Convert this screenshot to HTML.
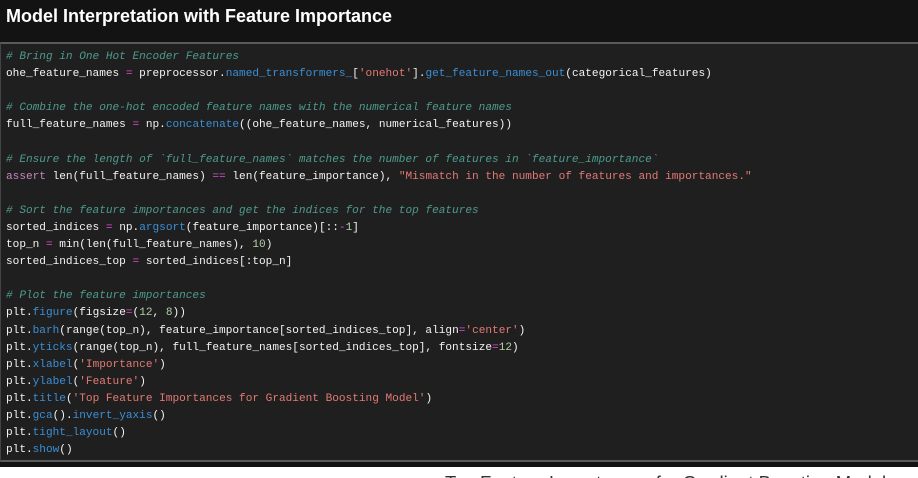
<!DOCTYPE html>
<html><head><meta charset="utf-8"><style>
html,body{margin:0;width:918px;height:478px;overflow:hidden;background:#fff;position:relative}
.title{position:absolute;left:0;top:0;width:918px;height:42px;background:#131313;color:#fff;font:bold 18px "Liberation Sans",sans-serif;line-height:33px;padding-left:6px;box-sizing:border-box}
.code{position:absolute;left:0;top:42px;width:918px;height:420px;background:#1f1f1f;border-top:2px solid #5a5a5a;border-bottom:2px solid #5a5a5a;box-sizing:border-box;border-left:1px solid #444}
pre{margin:0;position:absolute;left:5px;top:5px;font:11.1px "Liberation Mono",monospace;line-height:17.1px;color:#f4f4f4}
.c{color:#4e9a8e;font-style:italic}.f{color:#3b8fd6}.s{color:#e27a73}.o{color:#d84fd0}.k{color:#c586c0}.n{color:#b5cea8}
.dark{position:absolute;left:0;top:462px;width:918px;height:5px;background:#121212}
.pt{position:absolute;left:445px;top:472px;font:18.5px "Liberation Sans",sans-serif;color:#333;white-space:nowrap}
</style></head><body>
<div class="title">Model Interpretation with Feature Importance</div>
<div class="code"><pre><span class="c"># Bring in One Hot Encoder Features</span>
ohe_feature_names <span class="o">=</span> preprocessor.<span class="f">named_transformers_</span>[<span class="s">'onehot'</span>].<span class="f">get_feature_names_out</span>(categorical_features)

<span class="c"># Combine the one-hot encoded feature names with the numerical feature names</span>
full_feature_names <span class="o">=</span> np.<span class="f">concatenate</span>((ohe_feature_names, numerical_features))

<span class="c"># Ensure the length of `full_feature_names` matches the number of features in `feature_importance`</span>
<span class="k">assert</span> len(full_feature_names) <span class="o">==</span> len(feature_importance), <span class="s">"Mismatch in the number of features and importances."</span>

<span class="c"># Sort the feature importances and get the indices for the top features</span>
sorted_indices <span class="o">=</span> np.<span class="f">argsort</span>(feature_importance)[::<span class="o">-</span><span class="n">1</span>]
top_n <span class="o">=</span> min(len(full_feature_names), <span class="n">10</span>)
sorted_indices_top <span class="o">=</span> sorted_indices[:top_n]

<span class="c"># Plot the feature importances</span>
plt.<span class="f">figure</span>(figsize<span class="o">=</span>(<span class="n">12</span>, <span class="n">8</span>))
plt.<span class="f">barh</span>(range(top_n), feature_importance[sorted_indices_top], align<span class="o">=</span><span class="s">'center'</span>)
plt.<span class="f">yticks</span>(range(top_n), full_feature_names[sorted_indices_top], fontsize<span class="o">=</span><span class="n">12</span>)
plt.<span class="f">xlabel</span>(<span class="s">'Importance'</span>)
plt.<span class="f">ylabel</span>(<span class="s">'Feature'</span>)
plt.<span class="f">title</span>(<span class="s">'Top Feature Importances for Gradient Boosting Model'</span>)
plt.<span class="f">gca</span>().<span class="f">invert_yaxis</span>()
plt.<span class="f">tight_layout</span>()
plt.<span class="f">show</span>()</pre></div>
<div class="dark"></div>
<div class="pt">Top Feature Importances for Gradient Boosting Model</div>
</body></html>
